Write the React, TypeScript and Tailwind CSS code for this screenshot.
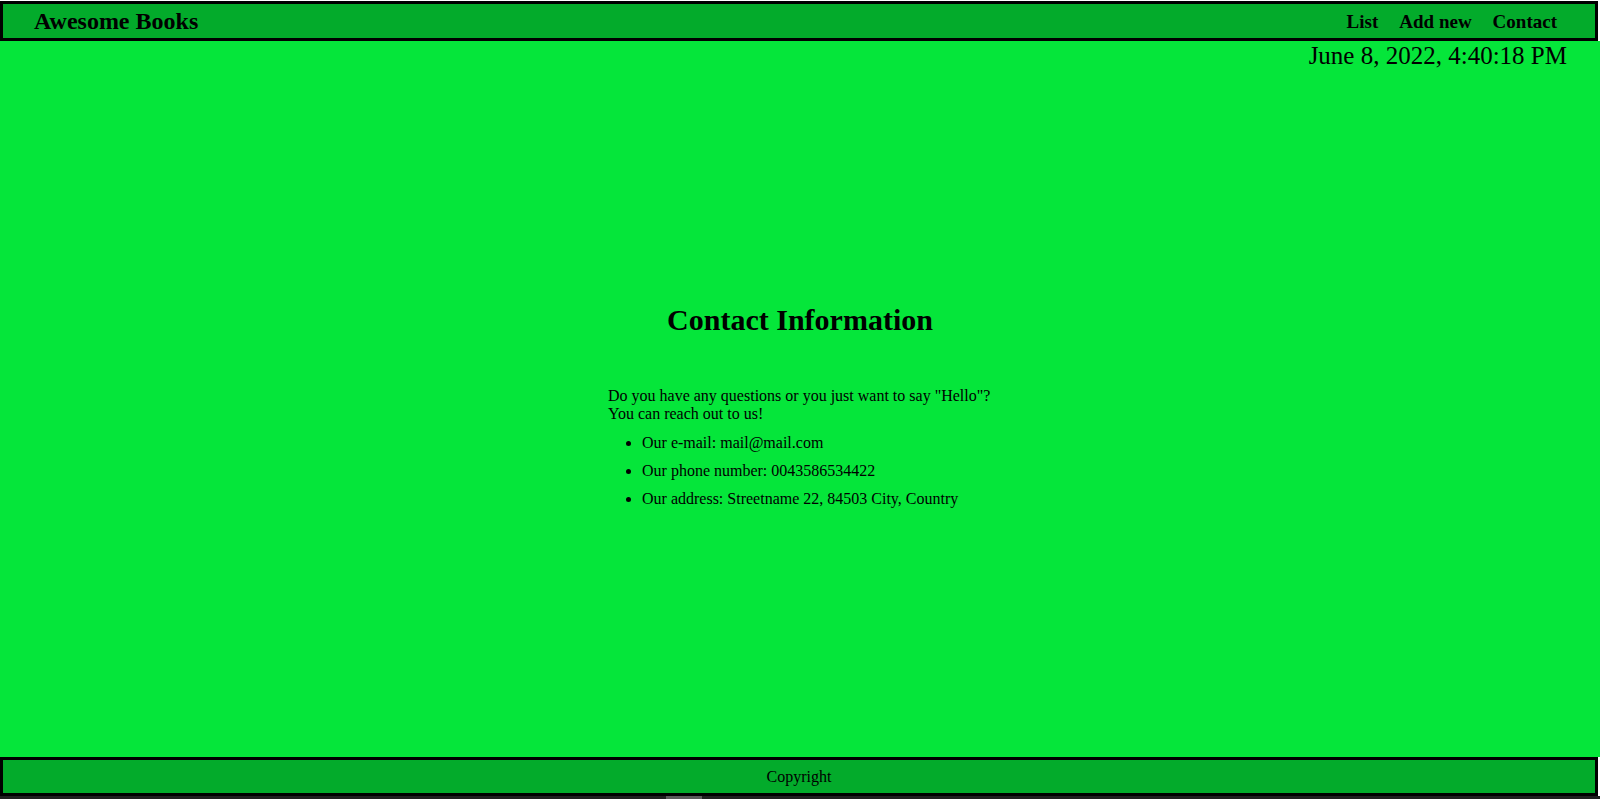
export default function App() {
  return (
    <div className="w-[1600px] h-[799px] overflow-hidden bg-white flex flex-col font-['Liberation_Serif','Times_New_Roman',serif] text-black">
      <header className="mt-px w-[1598px] h-[40px] shrink-0 border-[3px] border-black bg-[#03ab2b] flex items-center justify-between pl-[31px] pr-[38px]">
        <h1 className="text-[24px] font-bold leading-none">Awesome Books</h1>
        <nav className="flex items-center gap-[21px] text-[19px] font-bold leading-none">
          <a href="#list">List</a>
          <a href="#add">Add new</a>
          <a href="#contact">Contact</a>
        </nav>
      </header>

      <main className="h-[716px] shrink-0 bg-[#05e63a] flex flex-col">
        <p className="text-right pr-[33px] text-[25px] leading-[29px]">June 8, 2022, 4:40:18 PM</p>

        <section className="mt-[232px] flex flex-col items-center">
          <h2 className="text-[30px] font-bold leading-[35px]">Contact Information</h2>
          <div className="mt-[50px] w-[384px] text-[16px]">
            <p className="leading-[18px]">
              Do you have any questions or you just want to say "Hello"?
              <br />
              You can reach out to us!
            </p>
            <ul className="mt-[11px] pl-[34px] list-disc flex flex-col gap-[10px] leading-[18px]">
              <li>Our e-mail: mail@mail.com</li>
              <li>Our phone number: 0043586534422</li>
              <li>Our address: Streetname 22, 84503 City, Country</li>
            </ul>
          </div>
        </section>
      </main>

      <footer className="w-[1598px] h-[39px] shrink-0 border-[3px] border-black bg-[#03ab2b] flex items-center justify-center text-[16px]">
        Copyright
      </footer>

      <div className="h-[3px] shrink-0 bg-[#1f1f1f] flex">
        <div className="w-[666px]" />
        <div className="w-[36px] bg-[#5a5a5a]" />
      </div>
    </div>
  );
}
